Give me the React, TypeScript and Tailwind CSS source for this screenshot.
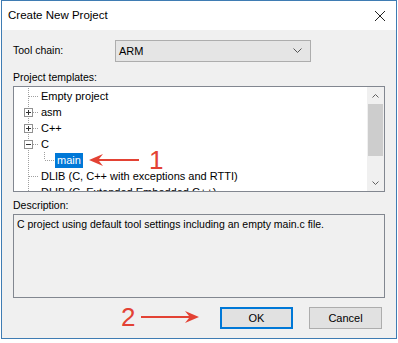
import React from "react";

const font = { fontFamily: '"Liberation Sans", Arial, sans-serif' };

function Guides({ kind, level }: { kind: "leaf" | "plus" | "minus" | "child" | "childlast"; level: number }) {
  const w = level === 0 ? 24 : 40;
  const dot = "#a0a0a0";
  return (
    <svg width={w} height={16} className="shrink-0 block">
      <line x1={14.5} y1={0} x2={14.5} y2={16} stroke={dot} strokeDasharray="1 1" />
      {level === 0 && (
        <line x1={15} y1={8.5} x2={24} y2={8.5} stroke={dot} strokeDasharray="1 1" />
      )}
      {level === 1 && (
        <>
          <line x1={30.5} y1={0} x2={30.5} y2={8} stroke={dot} strokeDasharray="1 1" />
          <line x1={31} y1={8.5} x2={40} y2={8.5} stroke={dot} strokeDasharray="1 1" />
        </>
      )}
      {(kind === "plus" || kind === "minus") && (
        <>
          <rect x={10.5} y={4.5} width={8} height={8} fill="#fff" stroke="#919191" />
          <line x1={12} y1={8.5} x2={17} y2={8.5} stroke="#333" />
          {kind === "plus" && <line x1={14.5} y1={6} x2={14.5} y2={11} stroke="#333" />}
        </>
      )}
    </svg>
  );
}

function Row({ label, kind, level, selected }: { label: string; kind: any; level: number; selected?: boolean }) {
  return (
    <div className="flex h-[16px] items-center whitespace-nowrap">
      <Guides kind={kind} level={level} />
      <span
        className={
          "ml-[1px] px-[2px] h-[15px] leading-[15px] text-[11px] " +
          (selected ? "bg-[#0078d7] text-white" : "text-black")
        }
      >
        {label}
      </span>
    </div>
  );
}

export default function App() {
  return (
    <div className="w-[398px] h-[343px] bg-white relative overflow-hidden" style={font}>
      <div className="absolute left-[1px] top-0 w-[396px] h-[339px] border border-[#3f7cb3] flex flex-col bg-[#f0f0f0]">
        <div className="h-[29px] bg-white flex items-center justify-between pl-[6px] pr-[10px] shrink-0">
          <span className="text-[11.5px] text-black">Create New Project</span>
          <svg width="12" height="12" viewBox="0 0 12 12">
            <path d="M1 1 L11 11 M11 1 L1 11" stroke="#222" strokeWidth="1" />
          </svg>
        </div>
        <div className="flex flex-col pl-[11px] pr-[10px]">
          <div className="flex items-center h-[22px] mt-[10px]">
            <span className="w-[102px] text-[10.5px] text-black">Tool chain:</span>
            <div className="w-[196px] h-[22px] bg-[#e5e5e5] border border-[#adadad] flex items-center justify-between pl-[3px] pr-[8px]">
              <span className="text-[11px] text-black">ARM</span>
              <svg width="9" height="6" viewBox="0 0 9 6">
                <path d="M0.5 0.5 L4.5 4.5 L8.5 0.5" fill="none" stroke="#555" />
              </svg>
            </div>
          </div>
          <div className="text-[10.5px] text-black mt-[8px] h-[15px] leading-[15px]">Project templates:</div>
          <div className="mt-[1px] w-[372px] h-[106px] bg-white border border-[#828790] flex">
            <div className="flex-1 flex flex-col pt-[1px] overflow-hidden">
              <Row label="Empty project" kind="leaf" level={0} />
              <Row label="asm" kind="plus" level={0} />
              <Row label="C++" kind="plus" level={0} />
              <Row label="C" kind="minus" level={0} />
              <Row label="main" kind="childlast" level={1} selected />
              <Row label="DLIB (C, C++ with exceptions and RTTI)" kind="leaf" level={0} />
              <Row label="DLIB (C, Extended Embedded C++)" kind="leaf" level={0} />
            </div>
            <div className="w-[17px] bg-[#f0f0f0] flex flex-col items-center">
              <div className="h-[17px] flex items-center justify-center">
                <svg width="7" height="4" viewBox="0 0 7 4">
                  <path d="M0.5 3.5 L3.5 0.5 L6.5 3.5" fill="none" stroke="#606060" />
                </svg>
              </div>
              <div className="w-[15px] h-[52px] bg-[#cdcdcd]" />
              <div className="flex-1" />
              <div className="h-[17px] flex items-center justify-center">
                <svg width="7" height="4" viewBox="0 0 7 4">
                  <path d="M0.5 0.5 L3.5 3.5 L6.5 0.5" fill="none" stroke="#606060" />
                </svg>
              </div>
            </div>
          </div>
          <div className="text-[10.5px] text-black mt-[6px] h-[15px] leading-[15px]">Description:</div>
          <div className="mt-[1px] w-[372px] h-[84px] bg-[#f0f0f0] border border-[#828790] px-[3px] pt-[2px] text-[10.5px] leading-[14px] text-black">
            C project using default tool settings including an empty main.c file.
          </div>
          <div className="flex items-center justify-end mt-[9px] gap-[16px] pr-[4px]">
            <button className="w-[73px] h-[22px] bg-[#e1e1e1] border-2 border-[#0078d7] text-[11px] text-black">
              OK
            </button>
            <button className="w-[73px] h-[22px] bg-[#e1e1e1] border border-[#adadad] text-[11px] text-black">
              Cancel
            </button>
          </div>
        </div>
      </div>
      <div className="absolute left-[89px] top-[147px] flex items-center gap-[10px]">
        <svg width="50" height="12" viewBox="0 0 50 12">
          <path d="M0 6 L14 0 L10 5 L50 5 L50 7 L10 7 L14 12 Z" fill="#e34234" />
        </svg>
        <span className="text-[26px] leading-[26px] text-[#e34234]">1</span>
      </div>
      <div className="absolute left-[121px] top-[304px] flex items-center gap-[6px]">
        <span className="text-[26px] leading-[26px] text-[#e34234]">2</span>
        <svg width="58" height="12" viewBox="0 0 58 12">
          <path d="M58 6 L44 0 L48 5 L0 5 L0 7 L48 7 L44 12 Z" fill="#e34234" />
        </svg>
      </div>
    </div>
  );
}
